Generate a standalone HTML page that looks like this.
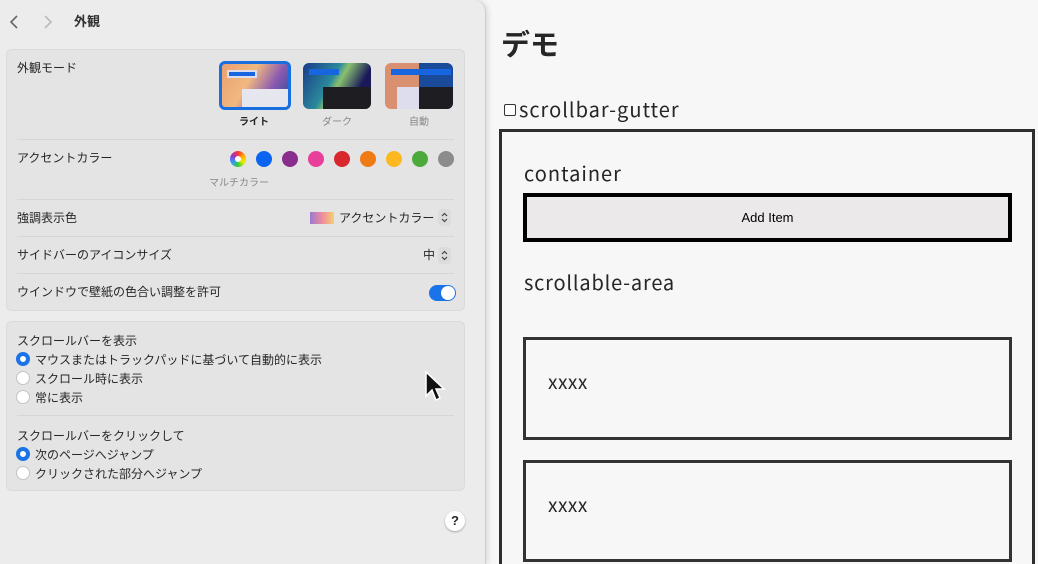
<!DOCTYPE html>
<html><head><meta charset="utf-8">
<style>
*{margin:0;padding:0;box-sizing:border-box}
html,body{width:1038px;height:564px;overflow:hidden}
body{background:#f7f7f7;position:relative;font-family:"Liberation Sans","Noto Sans CJK JP",sans-serif;color:#262626}
.abs{position:absolute}
#win{left:0;top:0;width:486px;height:564px;background:#ececec;border-right:1px solid #cfcfcf;border-top-right-radius:12px;box-shadow:2px 0 6px rgba(0,0,0,.12)}
.sec{position:absolute;left:6px;width:459px;background:#e4e4e4;border:1px solid #dadada;border-radius:6px}
.t{position:absolute;font-size:12px;white-space:nowrap;line-height:14px}
.hr{position:absolute;left:10px;right:10px;height:1px;background:#d6d6d6}
.dot{position:absolute;width:16px;height:16px;border-radius:50%;top:151px}
.radio{position:absolute;left:16px;width:14px;height:14px;border-radius:50%;background:#fff;border:1px solid #c4c4c4}
.radio.on{background:#fff;border:4px solid #1a73e8}
.thumb{position:absolute;top:61px;width:68px;height:46px;border-radius:6px;overflow:hidden}
.box{position:absolute;border:3px solid #333}
.n{font-family:"Noto Sans CJK JP","Liberation Sans",sans-serif}
.step{position:absolute;width:13px;height:17px;border-radius:4px;background:#dcdcdc}
</style></head><body>
<div id="win" class="abs">
 <svg class="abs" style="left:8px;top:14px" width="12" height="16"><path d="M9 2 L3 8 L9 14" fill="none" stroke="#666" stroke-width="1.6"/></svg>
 <svg class="abs" style="left:42px;top:14px" width="12" height="16"><path d="M3 2 L9 8 L3 14" fill="none" stroke="#bbb" stroke-width="1.6"/></svg>
 <div class="t" style="left:74px;top:15px;font-size:13px;font-weight:bold;color:#333">外観</div>

 <div class="sec" style="top:49px;height:262px">
  <div class="t" style="left:10px;top:11px">外観モード</div>
  <div class="thumb" style="left:212px;top:11px;width:72px;height:49px;border:3px solid #1a6fe0;background:linear-gradient(120deg,#e9a070,#f2b880 40%,#8a5ab0 70%,#2a4a9a)">
   <div class="abs" style="left:5px;top:6px;width:30px;height:8px;background:#1766e0;border:2px solid #dde"></div>
   <div class="abs" style="left:20px;top:25px;width:48px;height:22px;background:#e6e6ee"></div>
  </div>
  <div class="thumb" style="left:296px;top:13px;background:linear-gradient(120deg,#1a3a8a,#2a8a9a 40%,#8ac070 50%,#1a1a5a 75%)">
   <div class="abs" style="left:6px;top:6px;width:30px;height:6px;background:#1766e0"></div>
   <div class="abs" style="left:20px;top:24px;width:48px;height:22px;background:#1e1e22"></div>
  </div>
  <div class="thumb" style="left:378px;top:13px;background:linear-gradient(90deg,#d89070 50%,#1a4a9a 50%)">
   <div class="abs" style="left:6px;top:6px;width:60px;height:6px;background:#1766e0"></div>
   <div class="abs" style="left:12px;top:24px;width:22px;height:22px;background:#dde"></div>
   <div class="abs" style="left:34px;top:24px;width:34px;height:22px;background:#1e1e22"></div>
  </div>
  <div class="t" style="left:232px;top:66px;font-size:10px;font-weight:bold">ライト</div>
  <div class="t" style="left:315px;top:66px;font-size:10px;color:#888">ダーク</div>
  <div class="t" style="left:402px;top:66px;font-size:10px;color:#888">自動</div>
  <div class="hr" style="top:89px"></div>
  <div class="t" style="left:10px;top:101px">アクセントカラー</div>
  <div class="t" style="left:202px;top:127px;font-size:10px;color:#888">マルチカラー</div>
  <div class="hr" style="top:149px"></div>
  <div class="t" style="left:10px;top:161px">強調表示色</div>
  <div class="abs" style="left:303px;top:162px;width:24px;height:12px;background:linear-gradient(90deg,#9a7ad0,#f08aa0,#f4d070)"></div>
  <div class="t" style="left:332px;top:161px">アクセントカラー</div>
  <div class="hr" style="top:186px"></div>
  <div class="t" style="left:10px;top:198px">サイドバーのアイコンサイズ</div>
  <div class="t" style="left:416px;top:198px">中</div>
  <div class="hr" style="top:223px"></div>
  <div class="t" style="left:10px;top:235px">ウインドウで壁紙の色合い調整を許可</div>
  <div class="abs" style="left:422px;top:235px;width:27px;height:16px;border-radius:8px;background:#1a73e8"><div class="abs" style="right:1px;top:1px;width:14px;height:14px;border-radius:50%;background:#fff"></div></div>
 </div>
 <div class="step" style="left:438px;top:209px"><svg width="13" height="17"><path d="M4 7 L6.5 4.5 L9 7 M4 10 L6.5 12.5 L9 10" fill="none" stroke="#444" stroke-width="1.2"/></svg></div>
 <div class="step" style="left:438px;top:247px"><svg width="13" height="17"><path d="M4 7 L6.5 4.5 L9 7 M4 10 L6.5 12.5 L9 10" fill="none" stroke="#444" stroke-width="1.2"/></svg></div>
 <div class="dot" style="left:230px;background:conic-gradient(#f33,#fa0,#ee0,#3c3,#39f,#93c,#f33)"><div class="abs" style="left:5px;top:5px;width:6px;height:6px;border-radius:50%;background:#fff"></div></div>
 <div class="dot" style="left:256px;background:#0a64f0"></div>
 <div class="dot" style="left:282px;background:#8a2e8e"></div>
 <div class="dot" style="left:308px;background:#e8409a"></div>
 <div class="dot" style="left:334px;background:#d8282e"></div>
 <div class="dot" style="left:360px;background:#f07a14"></div>
 <div class="dot" style="left:386px;background:#fbb820"></div>
 <div class="dot" style="left:412px;background:#4caa3a"></div>
 <div class="dot" style="left:438px;background:#8c8c8c"></div>

 <div class="sec" style="top:321px;height:170px">
  <div class="t" style="left:10px;top:12px">スクロールバーを表示</div>
  <div class="t" style="left:28px;top:31px">マウスまたはトラックパッドに基づいて自動的に表示</div>
  <div class="t" style="left:28px;top:50px">スクロール時に表示</div>
  <div class="t" style="left:28px;top:69px">常に表示</div>
  <div class="hr" style="top:93px"></div>
  <div class="t" style="left:10px;top:107px">スクロールバーをクリックして</div>
  <div class="t" style="left:28px;top:126px">次のページへジャンプ</div>
  <div class="t" style="left:28px;top:145px">クリックされた部分へジャンプ</div>
 </div>
 <div class="radio on" style="top:352px"></div>
 <div class="radio" style="top:371px"></div>
 <div class="radio" style="top:390px"></div>
 <div class="radio on" style="top:447px"></div>
 <div class="radio" style="top:466px"></div>
 <div class="abs" style="left:445px;top:511px;width:20px;height:20px;border-radius:50%;background:#fff;box-shadow:0 1px 2px rgba(0,0,0,.3);font-size:13px;text-align:center;line-height:20px;font-weight:bold">?</div>
 <svg class="abs" style="left:424px;top:370px" width="24" height="36" viewBox="0 0 24 36"><path d="M2 2 L2 26 L8 20 L12 30 L16 28 L12 19 L20 19 Z" fill="#111" stroke="#fff" stroke-width="1.5"/></svg>
</div>

<div class="t n" style="left:501px;top:24px;font-size:29px;line-height:38px;font-weight:bold;color:#262626">デモ</div>
<div class="abs" style="left:504px;top:104px;width:12px;height:12px;border:1px solid #333;border-radius:2px;background:#fff"></div>
<div class="t n" style="left:519px;top:96px;font-size:20px;line-height:26px;color:#262626;letter-spacing:1px">scrollbar-gutter</div>
<div class="abs" style="left:499px;top:129px;width:536px;height:450px;border:3px solid #2e2e2e"></div>
<div class="t n" style="left:524px;top:160px;font-size:20px;line-height:26px;letter-spacing:1px">container</div>
<div class="abs" style="left:523px;top:193px;width:489px;height:49px;border:4px solid #000;background:#ebe9e9;font-size:13px;text-align:center;line-height:41px;color:#000">Add Item</div>
<div class="t n" style="left:524px;top:269px;font-size:20px;line-height:26px;letter-spacing:.8px">scrollable-area</div>
<div class="box" style="left:523px;top:337px;width:489px;height:103px"></div>
<div class="t n" style="left:548px;top:370px;font-size:19px;line-height:24px;letter-spacing:.5px">xxxx</div>
<div class="box" style="left:523px;top:460px;width:489px;height:102px"></div>
<div class="t n" style="left:548px;top:493px;font-size:19px;line-height:24px;letter-spacing:.5px">xxxx</div>
</body></html>
